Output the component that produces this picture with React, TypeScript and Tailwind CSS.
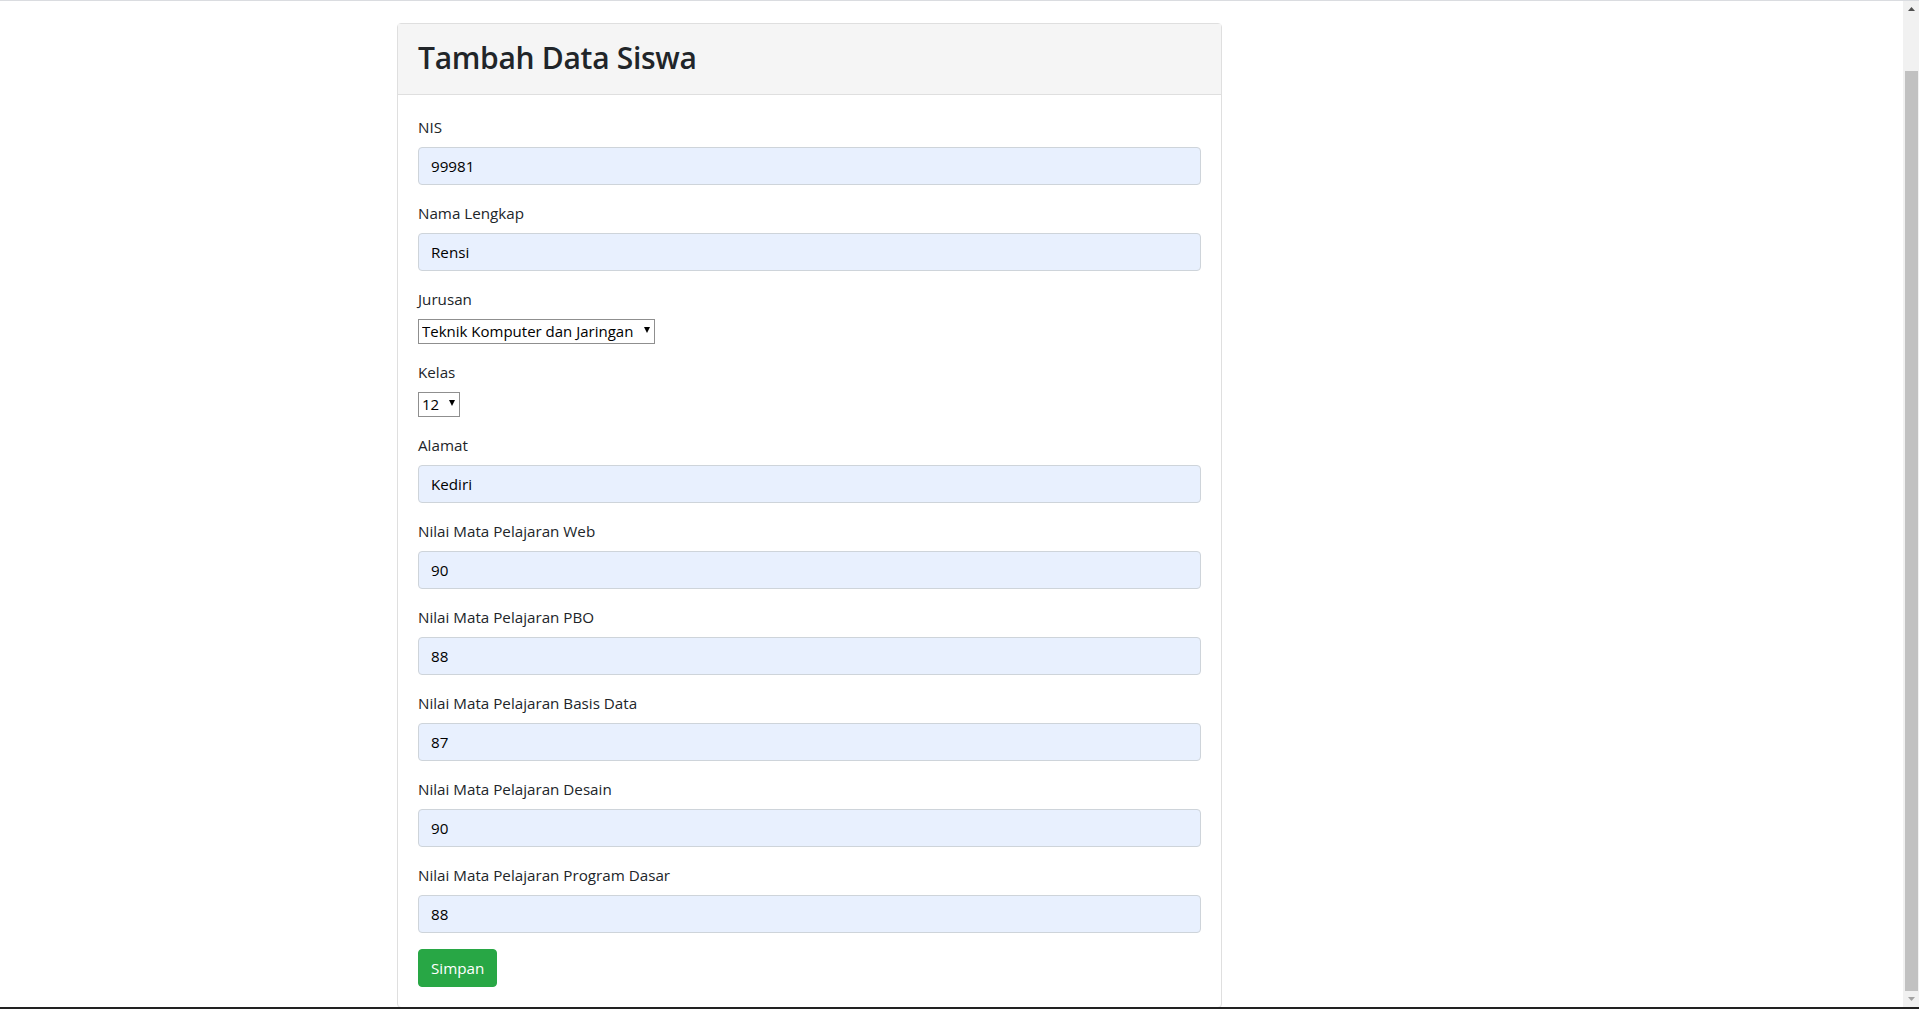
import { useState } from "react";

type Field = { label: string; name: string; value: string };

const fieldsAtas: Field[] = [
  { label: "NIS", name: "nis", value: "99981" },
  { label: "Nama Lengkap", name: "nama", value: "Rensi" },
];

const fieldsBawah: Field[] = [
  { label: "Alamat", name: "alamat", value: "Kediri" },
  { label: "Nilai Mata Pelajaran Web", name: "web", value: "90" },
  { label: "Nilai Mata Pelajaran PBO", name: "pbo", value: "88" },
  { label: "Nilai Mata Pelajaran Basis Data", name: "basisdata", value: "87" },
  { label: "Nilai Mata Pelajaran Desain", name: "desain", value: "90" },
  { label: "Nilai Mata Pelajaran Program Dasar", name: "progdas", value: "88" },
];

function Arrow() {
  return (
    <svg
      width="6"
      height="6"
      viewBox="0 0 6 6"
      className="pointer-events-none absolute right-[5px] top-[8px]"
    >
      <polygon points="0,0 6,0 3,6" fill="#000" />
    </svg>
  );
}

function InputGroup({ f }: { f: Field }) {
  const [val, setVal] = useState(f.value);
  return (
    <div className="mb-4">
      <label htmlFor={f.name} className="mb-2 block h-6 leading-6">
        {f.label}
      </label>
      <input
        id={f.name}
        type="text"
        value={val}
        onChange={(e) => setVal(e.target.value)}
        className="block h-[38px] w-full rounded border border-[#ced4da] bg-[#e8f0fe] px-3 text-black outline-none"
      />
    </div>
  );
}

export default function App() {
  const [jurusan, setJurusan] = useState("TKJ");
  const [kelas, setKelas] = useState("12");

  return (
    <div
      className="flex h-[1009px] flex-col overflow-hidden bg-white text-[15.2px] text-[#212529]"
      style={{ fontFamily: '"Open Sans", "Noto Sans", sans-serif' }}
    >
      <div className="h-px shrink-0 bg-[#dadce0]" />

      <div className="flex min-h-0 flex-1">
        {/* konten utama */}
        <div className="min-w-0 flex-1 overflow-hidden">
          <div className="ml-[397px] mt-[22px] w-[825px] rounded border border-[#dfdfdf]">
            <div className="flex h-[71px] items-center border-b border-[#dfdfdf] bg-[#f5f5f5] px-5">
              <h2 className="-mt-[3px] text-[30px] font-semibold leading-[46px] tracking-[-0.3px] text-[#212529]">
                Tambah Data Siswa
              </h2>
            </div>

            <form className="p-5" onSubmit={(e) => e.preventDefault()}>
              {fieldsAtas.map((f) => (
                <InputGroup key={f.name} f={f} />
              ))}

              <div className="mb-4">
                <label htmlFor="jurusan" className="mb-2 block h-6 leading-6">
                  Jurusan
                </label>
                <div className="relative inline-block align-top">
                  <select
                    id="jurusan"
                    value={jurusan}
                    onChange={(e) => setJurusan(e.target.value)}
                    className="block h-[25px] w-[237px] appearance-none rounded-none border border-[#8f8f8f] bg-white pl-[3px] pr-[14px] text-[15px] text-black outline-none"
                  >
                    <option value="TKJ">Teknik Komputer dan Jaringan</option>
                    <option value="RPL">Rekayasa Perangkat Lunak</option>
                    <option value="MM">Multimedia</option>
                  </select>
                  <Arrow />
                </div>
              </div>

              <div className="mb-4">
                <label htmlFor="kelas" className="mb-2 block h-6 leading-6">
                  Kelas
                </label>
                <div className="relative inline-block align-top">
                  <select
                    id="kelas"
                    value={kelas}
                    onChange={(e) => setKelas(e.target.value)}
                    className="block h-[25px] w-[42px] appearance-none rounded-none border border-[#8f8f8f] bg-white pl-[3px] text-[15px] text-black outline-none"
                  >
                    <option value="10">10</option>
                    <option value="11">11</option>
                    <option value="12">12</option>
                  </select>
                  <Arrow />
                </div>
              </div>

              {fieldsBawah.map((f) => (
                <InputGroup key={f.name} f={f} />
              ))}

              <button
                type="submit"
                className="h-[38px] rounded border border-[#28a745] bg-[#28a745] px-3 text-white hover:bg-[#218838]"
              >
                Simpan
              </button>
            </form>
          </div>
        </div>

        {/* scrollbar */}
        <div className="flex w-4 shrink-0 flex-col bg-[#f1f1f1]">
          <div className="flex h-4 shrink-0 items-center justify-center">
            <svg width="7" height="4" viewBox="0 0 7 4">
              <polygon points="0,4 7,4 3.5,0" fill="#505050" />
            </svg>
          </div>
          <div className="min-h-0 flex-1 pl-[2px] pr-px pt-[54px]">
            <div className="h-full w-[13px] bg-[#c1c1c1]" />
          </div>
          <div className="flex h-4 shrink-0 items-center justify-center">
            <svg width="7" height="4" viewBox="0 0 7 4">
              <polygon points="0,0 7,0 3.5,4" fill="#a3a3a3" />
            </svg>
          </div>
        </div>
      </div>

      <div className="h-[2px] shrink-0 bg-[#222222]" />
    </div>
  );
}
